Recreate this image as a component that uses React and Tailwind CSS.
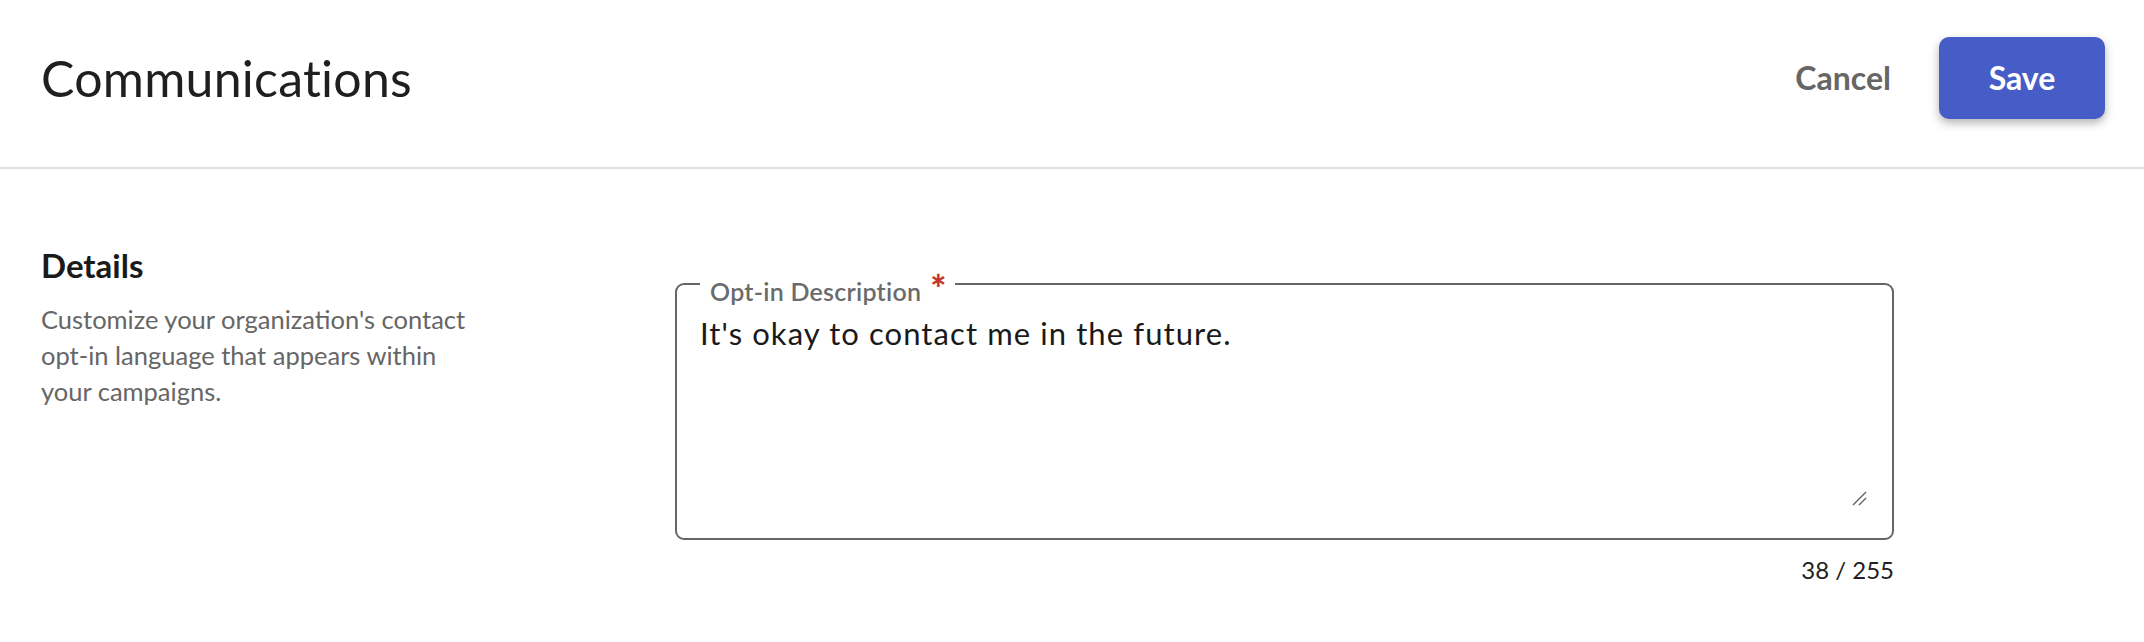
import React, { useState } from "react";

const App = () => {
  const [text, setText] = useState("It's okay to contact me in the future.");

  return (
    <div className="min-h-screen bg-white font-['Lato',sans-serif]">
      <header className="h-[169px] pt-[37px] pl-[41px] pr-[39px] border-b-2 border-[#e0e0e0]">
        <div className="h-[82px] flex items-center justify-between">
          <h1 className="text-[50px] leading-none tracking-[0.005em] text-[#1f1f1f]">Communications</h1>
          <div className="flex items-center gap-[48px]">
            <button className="text-[32px] font-bold text-[#666666]">Cancel</button>
            <button className="w-[166px] h-[82px] rounded-[10px] bg-[#465cc6] text-white text-[32px] font-bold shadow-[0_4px_10px_rgba(0,0,0,0.3)]">
              Save
            </button>
          </div>
        </div>
      </header>

      <main className="flex pl-[41px]">
        <section className="w-[634px] pt-[76px]">
          <h2 className="text-[33px] leading-[40px] font-bold text-[#1a1a1a]">Details</h2>
          <p className="mt-[16px] max-w-[440px] text-[25.5px] leading-[36px] text-[#666666]">
            Customize your organization's contact opt-in language that appears within your campaigns.
          </p>
        </section>

        <section className="w-[1219px] pt-[114px]">
          <div className="relative h-[257px] border-2 border-[#666666] rounded-[9px] pt-[30px] pl-[23px] pr-[24px] pb-[31px]">
            <label className="absolute -top-[8px] left-[23px] flex items-start bg-white pl-[10px] pr-[8px] text-[25px] leading-[28px] tracking-[0.01em] font-semibold text-[#6b6b6b]">
              Opt-in Description
              <span className="ml-[9px] -mt-[7px] text-[38px] leading-[36px] font-black text-[#c8372d]">*</span>
            </label>
            <textarea
              value={text}
              onChange={(e) => setText(e.target.value)}
              className="block w-full h-full resize-none outline-none text-[31px] leading-[36px] tracking-[0.035em] text-[#1a1a1a] font-['Lato',sans-serif]"
            />
            <svg
              className="absolute right-[25px] bottom-[32px] pointer-events-none"
              width="15"
              height="15"
              viewBox="0 0 15 15"
            >
              <line x1="1" y1="14" x2="14" y2="1" stroke="#666666" strokeWidth="1.5" />
              <line x1="7" y1="14" x2="14" y2="7" stroke="#666666" strokeWidth="1.5" />
            </svg>
          </div>
          <div className="mt-[14px] text-right text-[24px] leading-[32px] text-[#222222]">
            {text.length} / 255
          </div>
        </section>
      </main>
    </div>
  );
};

export default App;
